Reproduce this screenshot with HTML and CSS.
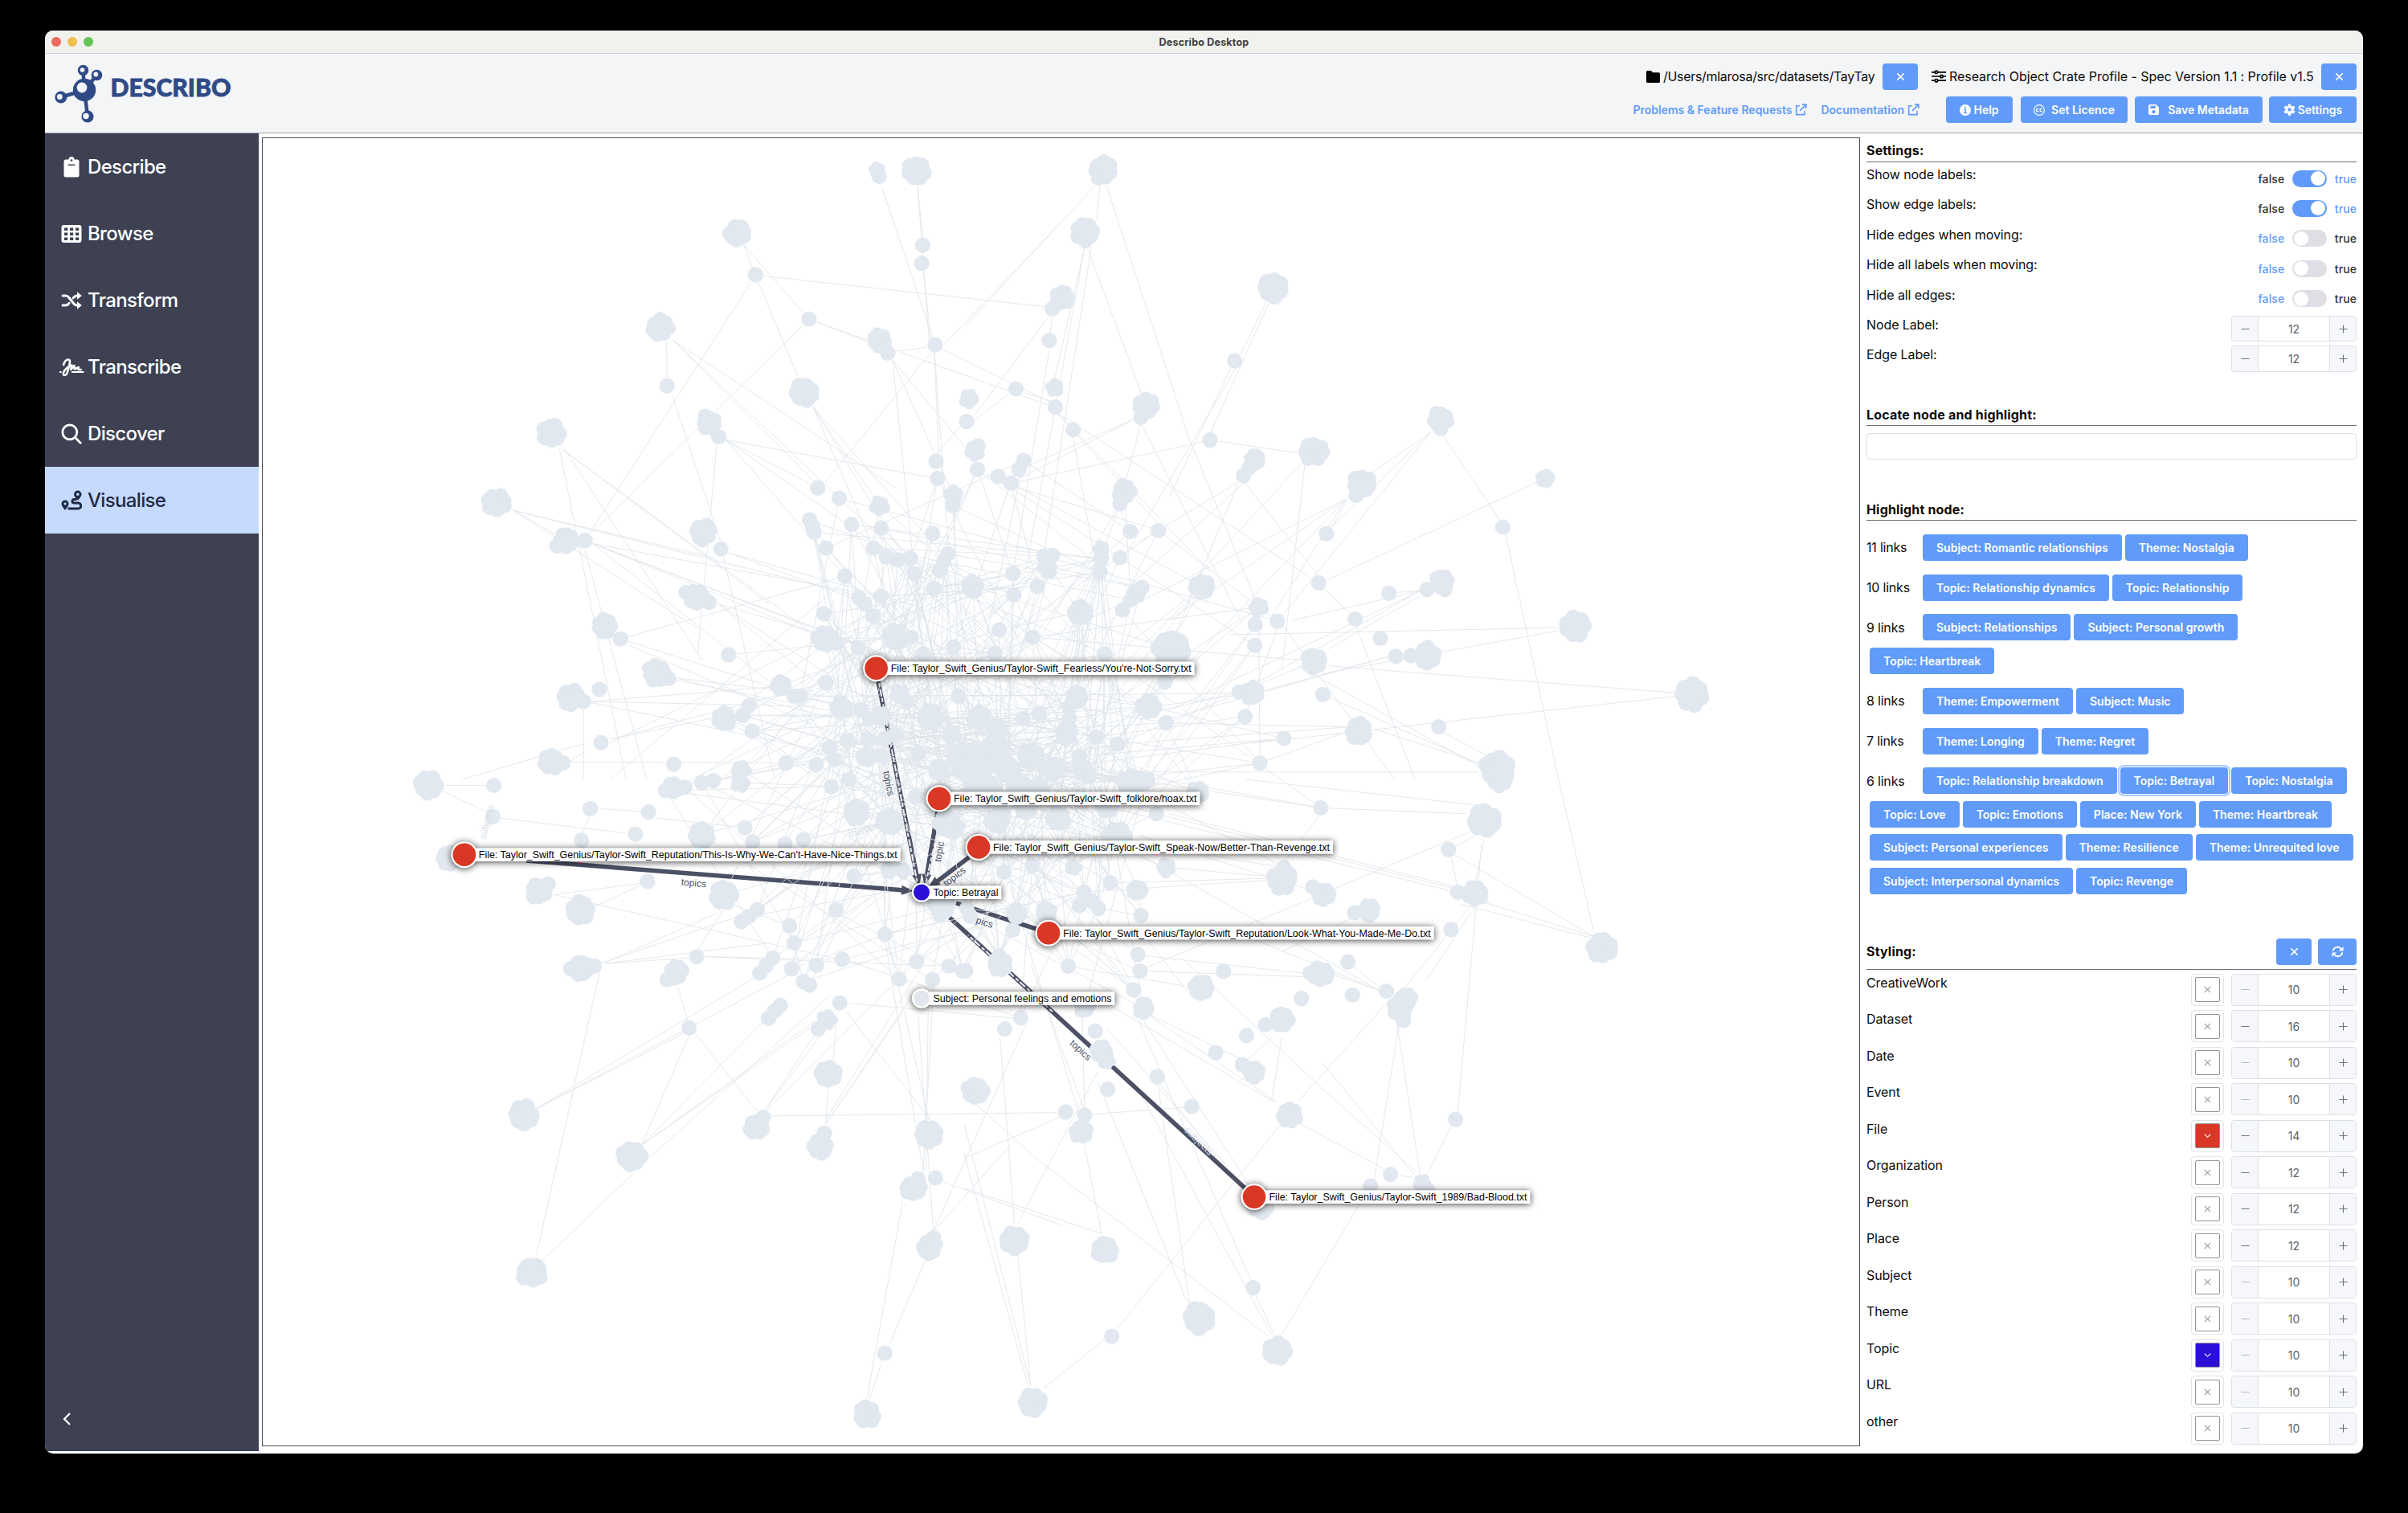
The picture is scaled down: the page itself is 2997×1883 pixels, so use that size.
FILE: index.html
```html
<!DOCTYPE html>
<html lang="en">
<head>
<meta charset="utf-8">
<title>Describo Desktop</title>
<link rel="stylesheet" href="styles.css">
</head>
<body>
<svg class="defs" width="0" height="0">
  <symbol id="i-x" viewBox="0 0 12 12"><path d="M1.5 1.5l9 9M10.500 1.500l-9 9" fill="none" stroke="currentColor" stroke-width="1.600"/></symbol>
  <symbol id="i-xthin" viewBox="0 0 12 12"><path d="M2 2l8 8M10 2l-8 8" fill="none" stroke="currentColor" stroke-width="1.100"/></symbol>
  <symbol id="i-down" viewBox="0 0 12 12"><path d="M2 4l4 4 4-4" fill="none" stroke="currentColor" stroke-width="1.200"/></symbol>
  <symbol id="i-minus" viewBox="0 0 12 12"><path d="M.5 6h11" stroke="currentColor" stroke-width="1.200"/></symbol>
  <symbol id="i-plus" viewBox="0 0 12 12"><path d="M.5 6h11M6 .5v11" stroke="currentColor" stroke-width="1.200"/></symbol>
  <symbol id="i-ext" viewBox="0 0 16 16"><path d="M6.500 3H1.800v11.500h11V9.500M9.500 1.200h5.300v5.300M14.500 1.500L6.500 9.500" fill="none" stroke="currentColor" stroke-width="1.700"/></symbol>
</svg>
<div class="window">
  <div class="titlebar">
    <div class="lights"><i class="light red"></i><i class="light amber"></i><i class="light green"></i></div>
    <span class="title">Describo Desktop</span>
  </div>
  <header class="header">
    <svg class="logo" width="224" height="76" viewBox="0 0 224 76">
      <g stroke="#2f4b87" stroke-width="4.500" fill="none"><path d="M38 34L36.500 10M38 34L53 16M38 34L9 43M38 34L42 67"/></g>
      <g fill="#2f4b87"><circle cx="38" cy="34" r="14.200"/><circle cx="36.500" cy="9.500" r="6.700"/><circle cx="53.500" cy="15.500" r="6.800"/><circle cx="8.800" cy="43" r="7.500"/><circle cx="42" cy="67" r="7.600"/></g>
      <g fill="#f3f5f7"><circle cx="35" cy="31" r="6.400"/><circle cx="35.500" cy="9" r="2.800"/><circle cx="52.300" cy="14.500" r="2.900"/><circle cx="7.300" cy="42.500" r="3.400"/><circle cx="40" cy="66.500" r="3.700"/></g>
      <text class="logo-text" x="70.500" y="42" textLength="150" lengthAdjust="spacingAndGlyphs">DESCRIBO</text>
    </svg>
    <div class="header-right">
      <div class="line">
        <svg class="folder" width="17" height="15" viewBox="0 0 17 15"><path d="M0 1.500Q0 0 1.500 0H6l2 2.200h7.500Q17 2.200 17 3.700v9.800Q17 15 15.500 15h-14Q0 15 0 13.500z"/></svg>
        <span class="path">/Users/mlarosa/src/datasets/TayTay</span>
        <button class="btn x-btn after-path"><svg width="11" height="11"><use href="#i-x"/></svg></button>
        <svg class="sliders" width="18" height="16" viewBox="0 0 18 16"><g stroke="#000" stroke-width="1.700" fill="#f3f5f7"><path d="M0 2.800h18M0 8h18M0 13.200h18"/><circle cx="6" cy="2.800" r="1.700"/><circle cx="12.500" cy="8" r="1.700"/><circle cx="6" cy="13.200" r="1.700"/></g></svg>
        <span class="profile">Research Object Crate Profile - Spec Version 1.1 : Profile v1.5</span>
        <button class="btn x-btn"><svg width="11" height="11"><use href="#i-x"/></svg></button>
      </div>
      <div class="line second">
        <a class="link problems"><span>Problems &amp; Feature Requests</span><svg width="15" height="15"><use href="#i-ext"/></svg></a>
        <a class="link docs"><span>Documentation</span><svg width="15" height="15"><use href="#i-ext"/></svg></a>
        <button class="btn help"><svg width="14" height="14" viewBox="0 0 14 14"><circle cx="7" cy="7" r="7" fill="#fff"/><path d="M5.300 6.300H7.300V10.500M5.300 10.500h3.700" stroke="#619bf9" stroke-width="1.500" fill="none"/><circle cx="7" cy="3.600" r="1.100" fill="#619bf9"/></svg><span>Help</span></button>
        <button class="btn licence"><svg width="14" height="14" viewBox="0 0 14 14" fill="none" stroke="#fff"><circle cx="7" cy="7" r="6.400" stroke-width="1.100"/><path d="M6.400 5.600a1.800 1.800 0 1 0 0 2.800M10.900 5.600a1.800 1.800 0 1 0 0 2.800" stroke-width="1.200"/></svg><span>Set Licence</span></button>
        <button class="btn save"><svg width="13" height="13" viewBox="0 0 14 14"><path fill="#fff" fill-rule="evenodd" d="M1.800 0H10l4 4v8.200Q14 14 12.200 14H1.800Q0 14 0 12.200V1.800Q0 0 1.800 0zM2.500 2v3.500h7V2zM7 7.500a2.300 2.300 0 1 0 .01 0z"/></svg><span>Save Metadata</span></button>
        <button class="btn settings"><svg width="15" height="15" viewBox="0 0 16 16"><g stroke="#fff" stroke-width="3.600"><path d="M8 0.400v15.200M1.400 4.200l13.200 7.600M1.400 11.800l13.200-7.600"/></g><circle cx="8" cy="8" r="5.600" fill="#fff"/><circle cx="8" cy="8" r="2.300" fill="#619bf9"/></svg><span>Settings</span></button>
      </div>
    </div>
  </header>
  <div class="body">
    <nav class="nav">
      <a class="item"><svg width="26" height="26" viewBox="0 0 26 26"><path fill="#fff" d="M6 3.500h3.500a3.500 3.500 0 0 1 7 0H20q2.500 0 2.500 2.500v17q0 2.500-2.500 2.500H6Q3.500 25.500 3.500 23V6Q3.500 3.500 6 3.500z"/><circle cx="13" cy="4.600" r="1.300" fill="#3d4152"/><path d="M8.500 10.300h9" stroke="#3d4152" stroke-width="1.600"/></svg>Describe</a>
      <a class="item"><svg width="26" height="26" viewBox="0 0 26 26"><path fill="#fff" fill-rule="evenodd" d="M3.500 2h19q3 0 3 3v16q0 3-3 3h-19q-3 0-3-3V5q0-3 3-3zM4 5.500v3.500h4.200V5.500zM11 5.500v3.500h4.200V5.500zM18 5.500v3.500h4.200V5.500zM4 11.500v3.500h4.200v-3.500zM11 11.500v3.500h4.200v-3.500zM18 11.500v3.500h4.200v-3.500zM4 17.500v3.500h4.200v-3.500zM11 17.500v3.500h4.200v-3.500zM18 17.500v3.500h4.200v-3.500z"/></svg>Browse</a>
      <a class="item"><svg width="26" height="26" viewBox="0 0 26 26"><g fill="none" stroke="#fff" stroke-width="3" stroke-linecap="round"><path d="M2 7h3.500q2.500 0 4 2l6.500 8q1.500 2 4 2h1M2 19h3.500q2.500 0 4-2l.5-.6M15 9.800l1-.8q1.500-2 4-2h1"/></g><path fill="#fff" d="M20 2.200l5.800 4.800-5.800 4.800zM20 14.200l5.800 4.800-5.800 4.800z"/></svg>Transform</a>
      <a class="item"><svg class="wide" width="32" height="26" viewBox="0 0 32 26"><g fill="none" stroke="#fff" stroke-width="2.600" stroke-linecap="round" stroke-linejoin="round"><path d="M6 10q2-6.500 6-6.500 3 0 1.500 6l-2.200 8.500q-1.300 5-4 5-2.500-.5-1-4 2.500-5.500 10-8.500l-1 5.500 4-5 .5 4.500 5-2.500-.5 3h3.500"/></g><path d="M1 19h2.500M16 19h15.500" stroke="#fff" stroke-width="2"/></svg>Transcribe</a>
      <a class="item"><svg width="26" height="26" viewBox="0 0 26 26"><g fill="none" stroke="#fff" stroke-width="2.800" stroke-linecap="round"><circle cx="10.800" cy="10.800" r="9"/><path d="M17.500 17.500l6.700 6.700"/></g></svg>Discover</a>
      <a class="item active"><svg width="26" height="26" viewBox="0 0 26 26"><path fill="#1f2a44" fill-rule="evenodd" d="M20.800.5a4.700 4.700 0 0 1 4.700 4.700c0 2.500-3 5.800-4.700 7.300-1.700-1.500-4.700-4.800-4.700-7.300A4.700 4.700 0 0 1 20.800.5zm0 2.900a1.800 1.800 0 1 0 .01 0zM5 12.500a4.500 4.500 0 0 1 4.500 4.500c0 2.500-3 6.300-4.500 7.800C3.500 23.300.5 19.500.5 17A4.500 4.500 0 0 1 5 12.500zm0 2.900a1.600 1.600 0 1 0 .01 0z"/><path d="M19.500 11.500h-3.200a2.300 2.300 0 0 0 0 4.600h5a3.400 3.400 0 0 1 0 6.900H8.500" fill="none" stroke="#1f2a44" stroke-width="3"/></svg>Visualise</a>
      <a class="collapse"><svg width="12" height="18" viewBox="0 0 12 18"><path d="M10 2L3 9l7 7" fill="none" stroke="#fff" stroke-width="2.200"/></svg></a>
    </nav>
    <main class="canvas"><svg id="graph" width="1985" height="1625" viewBox="328 173 1985 1625"></svg></main>
    <aside class="panel">
      <h2 class="head">Settings:</h2>
      <div class="rows short" id="options"></div>
      <h2 class="head locate">Locate node and highlight:</h2>
      <input class="search">
      <h2 class="head highlight">Highlight node:</h2>
      <div id="links"></div>
      <div class="head styling"><span>Styling:</span>
        <button class="btn x-btn"><svg width="11" height="11"><use href="#i-x"/></svg></button>
        <button class="btn refresh"><svg width="15" height="15" viewBox="0 0 16 16"><g fill="none" stroke="#fff" stroke-width="2"><path d="M1.800 7A6.200 6.200 0 0 1 13 4.500M14.200 9A6.200 6.200 0 0 1 3 11.500"/></g><path fill="#fff" d="M15.500 1v6h-6zM.5 15V9h6z"/></svg></button>
      </div>
      <div class="rows tall" id="styling"></div>
    </aside>
  </div>
</div>
<script src="app.js"></script>
</body>
</html>
```
FILE: styles.css
```css
* { box-sizing: border-box; }
body { margin: 0; background: #000; padding: 38px 56px 0; width: 2997px; height: 1883px; overflow: hidden; font-family: Inter, "Liberation Sans", sans-serif; font-size: 16px; color: #0b0b0b; }
.defs { position: absolute; }
.window { width: 2885px; height: 1771px; background: #fff; border-radius: 10px; overflow: hidden; display: flex; flex-direction: column; }
.titlebar { height: 29px; background: #f1f1ee; border-bottom: 1px solid #cfcfcf; display: grid; grid-template-columns: 200px 1fr 200px; align-items: center; }
.lights { display: flex; gap: 8px; padding-left: 8px; }
.light { width: 12px; height: 12px; border-radius: 50%; }
.red { background: #ed6a5e; }
.amber { background: #f4be4f; }
.green { background: #61c454; }
.title { text-align: center; font-weight: 700; font-size: 12.5px; color: #3f3f3f; letter-spacing: 0.2px; }
.header { height: 99px; background: #f3f5f7; border-bottom: 1px solid #a3a7ad; display: flex; justify-content: space-between; padding: 0 8px 0 11px; }
.logo { margin-top: 11px; }
.logo-text { font: 900 29.500px Lato, sans-serif; fill: #2f4b87; stroke: #2f4b87; stroke-width: 0.800px; }
.header-right { padding-top: 11px; }
.line { display: flex; align-items: center; height: 34px; justify-content: flex-end; }
.second { margin-top: 8px; height: 33px; }
.path { width: 264px; margin: 0 9px 0 4px; white-space: nowrap; letter-spacing: -0.3px; }
.profile { width: 455px; margin: 0 8px 0 4px; white-space: nowrap; letter-spacing: -0.05px; }
.after-path { margin-right: 17px; }
.btn { border: 0; border-radius: 4px; background: #619bf9; color: #fff; height: 33px; padding: 0; display: inline-flex; align-items: center; justify-content: center; font: 600 14px Inter, sans-serif; white-space: nowrap; flex: none; }
.x-btn { width: 44px; }
.refresh { width: 48px; margin-left: 8px; }
.link { display: flex; align-items: center; gap: 4px; color: #619bf9; font-weight: 600; font-size: 14px; white-space: nowrap; }
.problems { margin-right: 17px; }
.docs { margin-right: 33px; }
.help { width: 83px; gap: 3px; margin-right: 10px; }
.licence { width: 133px; gap: 8px; margin-right: 9px; }
.save { width: 159px; gap: 11px; margin-right: 8px; }
.settings { width: 109px; gap: 3px; }
.body { display: flex; flex: 1; }
.nav { width: 266px; height: 1640px; background: #3d4152; display: flex; flex-direction: column; }
.item { height: 83px; display: flex; align-items: center; gap: 7px; padding-left: 20px; color: #fff; font-weight: 500; font-size: 24px; letter-spacing: -0.65px; }
.item .wide { margin: 0 -3px; }
.active { background: #c6dafd; color: #1f2a44; }
.collapse { margin: auto 0 31px 21px; height: 18px; }
.canvas { margin: 5px 8px 0 4px; width: 1989px; height: 1629px; border: 1px solid #494c57; padding: 1px; }
.canvas svg { display: block; }
.panel { width: 610px; }
.head { margin: 0; padding-top: 9px; height: 35.500px; font-size: 16px; line-height: 24px; font-weight: 700; border-bottom: 1px solid #6b6f76; letter-spacing: 0.17px; }
.locate { margin-top: 32px; }
.highlight { margin-top: 40.500px; margin-bottom: 12.500px; }
.rows { display: flex; flex-direction: column; }
.short { gap: 5px; padding-top: 4.500px; }
.tall { gap: 5.500px; padding-top: 5px; }
.row { display: flex; align-items: flex-start; line-height: 23px; }
.short .row { height: 32.400px; }
.tall .row { height: 40px; }
.label { flex: 1; letter-spacing: -0.1px; }
.switch { display: flex; align-items: center; gap: 10px; height: 32px; font-size: 14px; font-weight: 500; color: #303133; letter-spacing: 0.1px; }
.switch .on { color: #619bf9; }
.track { width: 42.500px; height: 21px; border-radius: 11px; background: #dddfe5; padding: 1.500px 2px; display: flex; }
.track.right { background: #619bf9; justify-content: flex-end; }
.track i { width: 18px; height: 18px; border-radius: 50%; background: #fff; }
.number { width: 156px; height: 100%; border: 1px solid #dcdfe6; border-radius: 4px; display: grid; grid-template-columns: 33px 1fr 33px; color: #606266; font-size: 14px; overflow: hidden; }
.number span { display: flex; align-items: center; justify-content: center; }
.step { background: #f5f7fa; color: #6f7278; }
.step:first-child { border-right: 1px solid #dcdfe6; }
.step:last-child { border-left: 1px solid #dcdfe6; }
.step.off { color: #b5b8bf; }
.picker { width: 41px; height: 40px; border: 1px solid #e2e4ea; border-radius: 4px; margin-right: 9px; display: flex; align-items: center; justify-content: center; }
.swatch { width: 31px; height: 31px; border: 1px solid #909399; border-radius: 2px; display: flex; align-items: center; justify-content: center; color: #909399; }
.search { display: block; width: 610px; height: 33px; margin: 9px 0 0; border: 1px solid #dcdfe6; border-radius: 4px; }
.group { display: flex; flex-wrap: wrap; align-items: center; margin-bottom: 8.300px; }
.count { width: 66px; letter-spacing: -0.2px; }
.group .btn { margin: 4.200px 0 4.300px 4px; padding: 0 17px; }
.group .focus { outline: 2px solid #a9c9fd; outline-offset: 1px; }
.styling { margin-top: 42.500px; height: 47px; padding: 0 0 4.500px; display: flex; align-items: flex-end; }
.styling span { flex: 1; line-height: 33px; }
.faint { stroke: #dfe5eb; stroke-width: 0.850; fill: none; }
.strong { stroke: #4b5064; stroke-width: 5.500; fill: none; }
.grain { stroke: #e9ecf1; stroke-width: 2; stroke-dasharray: 5 3 9 2; fill: none; }
.node { fill: #e2e8f0; }
.tag { fill: #fff; filter: drop-shadow(0 1px 4px rgba(0,0,0,.75)); }
.tag-text { font: 12px "Liberation Sans", Arial, sans-serif; fill: #000; }
.edge-text { font: 12px "Liberation Sans", Arial, sans-serif; fill: #4b5064; text-anchor: middle; }
.edge-text.pale { fill: #d9dfe7; }
```
FILE: app.js
```js
const icon = (id, size) => `<svg width="${size}" height="${size}"><use href="#i-${id}"/></svg>`;
const number = (v, off) => `<div class="number"><span class="step${off ? ' off' : ''}">${icon('minus', 11)}</span><span>${v}</span><span class="step">${icon('plus', 11)}</span></div>`;
const toggle = on => `<div class="switch"><span class="${on ? '' : 'on'}">false</span><div class="track ${on ? 'right' : ''}"><i></i></div><span class="${on ? 'on' : ''}">true</span></div>`;
const row = (label, control) => `<div class="row"><span class="label">${label}</span>${control}</div>`;

document.getElementById('options').innerHTML =
  [['Show node labels:', 1], ['Show edge labels:', 1], ['Hide edges when moving:', 0], ['Hide all labels when moving:', 0], ['Hide all edges:', 0]]
    .map(([l, on]) => row(l, toggle(on))).join('') + row('Node Label:', number(12)) + row('Edge Label:', number(12));

document.getElementById('links').innerHTML = [
  [11, 'Subject: Romantic relationships', 'Theme: Nostalgia'],
  [10, 'Topic: Relationship dynamics', 'Topic: Relationship'],
  [9, 'Subject: Relationships', 'Subject: Personal growth', 'Topic: Heartbreak'],
  [8, 'Theme: Empowerment', 'Subject: Music'],
  [7, 'Theme: Longing', 'Theme: Regret'],
  [6, 'Topic: Relationship breakdown', 'Topic: Betrayal', 'Topic: Nostalgia', 'Topic: Love', 'Topic: Emotions', 'Place: New York', 'Theme: Heartbreak', 'Subject: Personal experiences', 'Theme: Resilience', 'Theme: Unrequited love', 'Subject: Interpersonal dynamics', 'Topic: Revenge']
].map(([n, ...names]) => `<div class="group"><span class="count">${n} links</span>${names.map(t => `<button class="btn${t === 'Topic: Betrayal' ? ' focus' : ''}">${t}</button>`).join('')}</div>`).join('');

document.getElementById('styling').innerHTML = [
  ['CreativeWork', 10], ['Dataset', 16], ['Date', 10], ['Event', 10], ['File', 14, '#d83825'], ['Organization', 12], ['Person', 12],
  ['Place', 12], ['Subject', 10], ['Theme', 10], ['Topic', 10, '#2b0fd6'], ['URL', 10], ['other', 10]
].map(([l, n, c]) => row(l, `<div class="picker"><div class="swatch"${c ? ` style="background:${c};color:#fff"` : ''}>${icon(c ? 'down' : 'xthin', 11)}</div></div>` + number(n, n === 10))).join('');

// Graph layout in tiles, each with its origin, scale, nodes "x,y[,r]" and edges "x1,y1,x2,y2".
const tiles = [
  { x: 320, y: 170, kx: 1.568, ky: 1.96,
    nodes: '1210,82,11 1214,97 1287,84,19 938,237,18 973,337 1299,265 1297,309 1077,445 787,465,18 800,608 1215,497,16 1231,528 1323,508 1068,623,19 882,698,16 875,682 901,732 575,723,19 468,893,19 1094,857 1136,882 1325,792 1328,834 1359,874,13 1357,900 1215,900,13 1218,955 1078,935 1084,950 1087,965 1160,946 1318,968 1110,1004 1203,1004 870,965,18 905,1006 602,985,17 640,985 585,998 1228,1025 1250,1033 1275,1028 1283,1066 1348,1018 1340,1035 1332,1058 1321,1103 1147,1072 1217,1122 1106,1164 1174,1125 1186,1140 1203,1170 858,1122,17 837,1112 882,1136 678,1192,17 709,1225 920,1264 1108,1225,18 1130,1235 1173,1247 1245,1222,17 1277,1222 1359,1245 1300,1262 779,1308,18 803,1322 612,1367,18 637,1378 668,1348 1022,1338,14 1060,1365 1048,1365 1110,1332 1140,1392,15 1178,1398 960,1388 912,1420,16 948,1412 966,1450 671,1478 575,1525,17 597,1528 813,1531 1032,1528 1091,1532 1117,1490 1127,1520 1152,1472 1253,1360,13 1268,1378 1219,1412,13 1195,1420 1369,1365 1313,1417,17 1355,1460,13 1193,1470 1225,1468 1245,1460 1190,1512,14 1220,1512 1290,1505 1375,1510,17 945,1545,13 1330,1545,14',
    edges: '1218,120,1318,490 1289,120,1299,250 1289,120,1312,508 1300,325,1315,495 950,265,967,320 950,265,1065,428 978,355,1055,583 988,340,1545,416 963,357,640,985 1065,460,655,965 1093,453,1190,500 1093,453,1545,655 812,497,1100,857 812,497,1250,860 812,497,1320,1100 799,500,800,590 810,630,905,990 1568,210,1340,508 1320,520,1110,840 1250,524,1305,514 1340,520,1560,655 1240,545,1350,850 1240,545,1390,770 1240,545,1283,1066 1322,525,1330,780 1322,525,1350,1020 1085,660,1215,900 1085,660,1283,1066 1085,660,1203,1004 1085,660,1340,1020 1400,692,1468,627 1370,710,1325,775 1500,625,1560,650 915,740,1325,834 915,740,1094,857 915,740,1283,1060 915,740,1147,1072 897,750,860,1260 595,762,1000,1140 595,762,1170,1290 590,762,720,1568 600,762,870,1280 500,912,900,1030 500,912,1205,1130 500,912,640,1010 500,912,860,1200 655,993,1200,1250 655,993,1110,1225 655,993,1300,1300 655,993,1000,1330 655,993,1217,1122 640,1010,760,1568 920,1015,1300,1150 920,1015,1170,1130 910,1025,1010,1568 900,1140,1200,1250 900,1140,1350,1500 900,1140,1300,1540 709,1225,1150,1072 709,1225,1060,1365 725,1240,1150,1470 815,1320,1140,1370 815,1320,1190,1440 650,1378,1030,1340 650,1378,1090,1390 650,1380,1110,1500 637,1400,637,1568 690,1470,960,1400 690,1470,1110,1332 400,1568,640,1480 610,1525,1030,1528 610,1525,640,1500 1300,1100,690,1478 1147,1085,690,1568' },
  { x: 1200, y: 170, kx: 1.568, ky: 1.96,
    nodes: '271,83,19 235,233,19 192,393,16 172,420 166,497 101,615 177,612,12 178,660 213,715 10,640,13 5,695 20,768,13 27,755 26,812 116,790 107,812 66,829 91,845 356,655,17 345,685 604,370,20 528,547 480,740 568,788,14 545,827 556,808 682,768,19 776,848,19 765,875 930,690,17 930,712 1134,834,13 1051,953 313,865,16 304,895 324,963 379,961 267,1005,11 268,1030 265,1062 304,1027 707,969 692,1089 829,1114 155,1023 172,1022 163,1055,13 95,1066 143,1097 97,1118 17,1097,15 335,1115,13 347,1100 325,1130 309,1155 464,1098,17 227,1160,17 68,1203 134,1221 60,1260 275,1262 575,1148,13 568,1190 611,1182 567,1241 763,1177 812,1224 932,1085,16 903,1105 938,1105 1192,1195,20 404,1250,25 842,1268 872,1266 903,1265,18 683,1280,17 392,1330 218,1362,13 205,1390 205,1420 360,1390,17 394,1430 562,1357,16 537,1355 548,1415 700,1361 1420,1360,22 769,1450,18 926,1440 624,1468 577,1528 30,1418,16 65,1448,14 115,1420 146,1408 198,1460,14 258,1465 299,1482 130,1510,17 45,1515,22 10,1510,15 225,1512 180,1540,14 1040,1540,22 235,1550,13 340,1570,14',
    edges: '255,120,0,465 265,120,258,200 278,120,440,740 440,740,575,1150 235,270,175,600 235,270,120,1060 248,270,155,1023 240,270,350,640 172,435,168,480 170,430,20,680 166,520,95,1066 590,402,540,530 595,405,480,725 530,565,320,1010 520,565,400,880 910,722,710,960 910,722,760,850 935,730,1045,935 910,722,620,1170 1118,843,708,1082 1057,972,1160,1568 1390,1357,700,1290 1390,1365,560,1480 1160,1198,520,1215 1160,1205,700,1310 650,772,497,743 660,795,460,1065 665,795,620,1300 465,745,95,845 545,840,690,1070 550,840,320,1100 545,835,340,990 535,845,350,1400 750,880,720,950 745,885,400,1180 745,885,350,1400 745,885,600,1170 745,885,309,1155 890,1108,845,1112 890,1108,640,1180 890,1108,400,1400 890,1108,560,1340 890,1120,710,1250 1010,1530,800,1445 1005,1530,700,1361 1020,1510,930,1450 1005,1550,300,1550 1010,1540,650,1290 330,690,130,800 330,690,91,845 345,700,304,895 345,700,540,1180 178,670,379,945 178,670,692,1089 180,670,480,1060 213,735,330,1568 100,855,379,960 45,820,304,1027 300,905,140,1240 300,905,325,960 750,1440,300,1482 750,1440,394,1430 750,1450,577,1528 611,1200,548,1415 830,1268,560,1360 830,1268,400,1420 692,1089,763,1177 763,1190,880,1568 620,1190,840,1568' },
  { x: 320, y: 970, kx: 1.568, ky: 1.867,
    nodes: '335,12,19 462,14 460,86 650,68 764,76 633,142 738,127 812,20,15 835,18 797,26 868,8 890,3 943,8,13 1121,17 1155,0 868,130,17 952,112 967,145 1066,140 1030,150 1170,78,17 1235,98,18 1345,100,18 1285,40 375,182,17 550,258,17 568,243 540,273 631,303,19 762,237 911,268,19 945,330 960,318 976,303 1165,225 1232,212,11 1260,212,11 1039,340 1048,380 1130,303 1225,360 632,440,17 658,433 612,440 858,412 818,448,16 800,465 1006,415 993,433 981,450 1043,440 1092,432 1142,418 1066,470 1078,478 1253,464 1287,423 1350,434 1377,445 1318,465 1021,525 1010,538 998,555 1137,519 1112,558,13 1095,580 843,577 1114,683,18 520,780,20 731,876,20 988,785 975,808,17 1107,822 1100,855,17 1311,825,19 1290,928 1281,950,17 1324,926 1320,1065 1312,1087,17 1225,1333 1190,1476,18 536,1145,20 1335,295,17 1332,315',
    edges: '545,765,1000,440 545,765,1060,440 545,765,850,580 750,850,1090,560 750,850,1137,530 750,850,990,560 750,850,845,590 765,880,1120,500 545,1105,670,440 555,1120,735,915 990,770,1090,590 990,770,1137,535 990,775,1287,423 855,590,975,770 1005,782,1560,774 1110,800,1114,720 1110,800,1280,500 1110,800,1260,540 1125,650,1130,560 1305,910,1310,500 1300,910,1320,480 1190,1440,1260,980 1195,1440,1220,1350 1235,1310,1305,1115 1320,1050,1500,570 1320,1050,1470,850 1320,1050,1290,550 1340,935,1568,1035 680,428,840,415 680,428,1000,380 680,425,900,310 822,485,840,560 350,14,450,14 350,20,455,80 475,90,720,125 435,120,455,100 580,268,1180,430 565,270,760,240 650,300,760,240 875,412,1120,418 875,412,1350,434 911,300,858,400 925,290,1039,340 1110,790,1300,430 1155,520,1480,555 1150,540,1320,800 1230,370,1311,790 1225,370,1300,910 650,85,633,130 670,68,764,76 780,90,950,112 1130,310,1400,470 960,310,640,440' },
  { x: 1200, y: 970, kx: 1.568, ky: 1.867,
    nodes: '22,724,18 98,1070,19 198,773 235,780 229,820,15 280,720 256,585 268,632,15 278,655,11 377,691 444,760 133,1447,19 288,1294 274,1093,18 458,1252,21 564,1181 611,1328,19 577,985,20 832,918 793,945 893,938,12 905,955 959,790 635,780,17 543,663 565,680,15 491,635 551,595 588,570 620,558,17 658,509 506,446 463,485,17 758,501 749,424 696,452,17 675,450 824,492 862,510,15 850,532,17 857,560 350,532,14 331,489 343,445 339,407 203,434 345,316 70,430,16 68,410 3,445 110,554 79,580 235,530,14 1245,390,20 950,349 963,262 998,265,17 945,163 696,66 1014,95,22 620,232,20 624,205 702,268,16 680,250 762,310 790,305,15 1045,0,17 338,257,14 285,240 225,293 262,300 250,283 234,262 103,312,14 95,350 160,310,14 394,205,13 300,135,20 375,80 455,30,15 213,205,11 133,200 78,215 180,90,15 120,70,14 65,95,17 5,300 12,318 105,15,15 150,20,13 45,30,20 230,50,11',
    edges: '1228,365,960,265 1228,365,950,170 1228,370,970,290 1160,0,1228,350 1010,150,963,775 950,808,905,915 1000,290,900,470 990,290,850,500 655,800,820,905 615,805,300,1275 275,1300,155,1415 130,1410,0,800 130,1410,105,1110 125,1410,0,870 435,1215,260,700 440,1220,377,700 600,1290,330,700 605,1290,568,1195 595,1295,140,880 140,880,0,730 560,1165,340,560 620,1290,780,970 840,530,890,920 800,930,850,560 885,915,700,720 700,720,430,420 268,1055,0,950 268,1055,235,850 98,1030,70,600 105,1030,260,680 820,492,749,424 810,490,700,445 810,490,500,340 810,490,350,180 250,778,430,762 0,880,200,778 650,750,840,500 1014,140,998,240 980,80,696,66 1000,130,945,163 1000,60,550,0 990,120,350,440 960,250,400,80 960,255,375,80 960,262,300,70 696,80,620,200 590,225,400,205 590,230,300,240 670,255,340,130 760,320,620,400 700,460,343,445 660,450,331,407 430,480,203,434 440,500,350,360 600,600,545,660 540,650,350,540 620,600,600,745 610,750,350,540 605,750,250,500 550,950,280,580 545,960,377,700 560,950,350,560 230,800,90,250 235,770,130,430 235,770,230,530 900,950,700,660 850,920,875,925 950,180,963,250' },
  { x: 1000, y: 800, kx: 3, ky: 3,
    nodes: '655,430,21 720,385,17 640,520,17 760,470,17 930,470,16 985,330,14 1020,205,15 560,690,15 850,415,14 1220,525,18 1280,515,12 955,655,15 735,650,14 1130,610,15 1175,730,17 590,470,14 1060,490,13 830,560,15',
    edges: '' }
];

// Small seeded generator so the layout is stable between reloads.
let seed = 41;
const rand = () => (seed = (seed * 16807) % 2147483647) / 2147483647;
const f = n => n.toFixed(1);
const nodes = [], edges = [];
for (const t of tiles) {
  const px = (x, y) => [t.x + x / t.kx, t.y + y / t.ky];
  for (const s of t.nodes.split(' ')) { const [x, y, r] = s.split(',').map(Number); nodes.push([...px(x, y), r || 9.6]); }
  for (const s of t.edges.split(' ').filter(Boolean)) { const [a, b, c, d] = s.split(',').map(Number); edges.push([...px(a, b), ...px(c, d)]); }
}
const path = list => list.map(([a, b, c, d]) => `M${f(a)} ${f(b)}L${f(c)} ${f(d)}`).join('');

const core = nodes.filter(([x, y]) => Math.hypot((x - 1240) / 430, (y - 930) / 360) < 1);
const inner = nodes.filter(([x, y]) => Math.hypot((x - 1240) / 220, (y - 930) / 210) < 1);
const links = [];
for (let i = 0; i < 860; i++) {
  const a = core[Math.floor(rand() * core.length)], pool = rand() < 0.65 ? inner : core;
  const b = pool[Math.floor(rand() * pool.length)];
  if (Math.hypot(a[0] - b[0], a[1] - b[1]) < 380) links.push([a[0], a[1], b[0], b[1]]);
}
const under = links.length - 160;

const blob = ([x, y, r]) => {
  if (r < 10) return `<circle cx="${f(x)}" cy="${f(y)}" r="${r}"/>`;
  const n = r < 14 ? 5 : 7, q = r * 0.5, start = rand() * 6;
  let out = `<circle cx="${f(x)}" cy="${f(y)}" r="${f(r * 0.85)}"/>`;
  for (let i = 0; i < n; i++) {
    const a = start + i * 6.283 / n + rand() * 0.4, d = r * (0.44 + rand() * 0.14);
    out += `<circle cx="${f(x + d * Math.cos(a))}" cy="${f(y + d * Math.sin(a))}" r="${f(q)}"/>`;
  }
  return out;
};

const strong = [
  [655, 1071, 1126, 1108], [1093, 848, 1141, 1090], [1167, 1010, 1153, 1092], [1206, 1067, 1165, 1098], [1305, 1161, 1190, 1124], [1551, 1480, 1182, 1142]
];
const arrow = (x, y, deg) => `<path fill="#4b5064" transform="translate(${x} ${y}) rotate(${deg})" d="M0 0l-15-6v12z"/>`;
const label = (x, y, deg, t, pale) => `<text class="edge-text${pale ? ' pale' : ''}" transform="translate(${x} ${y}) rotate(${deg})" y="4">${t}</text>`;
const base = 'File: Taylor_Swift_Genius/Taylor-Swift_';
const tags = [
  [1090.6, 831.7, 14.3, '#d83825', base + "Fearless/You're-Not-Sorry.txt", 1108.7, 374],
  [1169, 993.8, 14.3, '#d83825', base + 'folklore/hoax.txt', 1187, 302.500],
  [1218, 1054.400, 14.3, '#d83825', base + 'Speak-Now/Better-Than-Revenge.txt', 1236, 419],
  [1305, 1161.2, 14.3, '#d83825', base + 'Reputation/Look-What-You-Made-Me-Do.txt', 1323.2, 457.500],
  [577.9, 1063.700, 14.3, '#d83825', base + "Reputation/This-Is-Why-We-Can't-Have-Nice-Things.txt", 595.8, 521],
  [1561, 1489.600, 14.3, '#d83825', base + '1989/Bad-Blood.txt', 1579.500, 321],
  [1147, 1110.600, 10, '#2b0fd6', 'Topic: Betrayal', 1161.400, 81],
  [1147, 1242.500, 10, '#e2e7ee', 'Subject: Personal feelings and emotions', 1161.400, 222]
];
document.getElementById('graph').innerHTML =
  `<path class="faint" d="${path(edges)}"/><path class="faint" d="${path(links.slice(0, under))}"/>` +
  `<path class="strong" d="${path(strong)}"/>` +
  arrow(1137, 1109, 5) + arrow(1144, 1103, 79) + arrow(1151, 1103, 99) + arrow(1155, 1105, 143) +
  `<path class="grain" d="${path([[1094, 850, 1142, 1100], [1168, 1030, 1152, 1100], [1310, 1259, 1205, 1164]])}"/>` +
  `<path class="faint" d="${path(links.slice(under))}"/><g class="node">${nodes.map(blob).join('')}</g>` +
  label(863.4, 1099, 5, 'topics') + label(1106, 975, 79, 'topics') + label(1169, 1060, -80, 'topic') + label(1188, 1091, -38, 'topics') +
  label(1225.500, 1148, 18, 'pics') + label(1345, 1307, 43, 'topics') +
  label(606, 1023, -75, 'subjects', 1) + label(1075, 1033, -17, 'themes', 1) + label(1492, 1420, 45, 'subjects', 1) +
  tags.map(([x, y, r, c, t, tx, w]) => `<g class="tag"><rect x="${x}" y="${f(y - 8.3)}" width="${f(tx + w + 4 - x)}" height="16.600"/><circle cx="${x}" cy="${y}" r="${r + 2.2}"/></g><circle cx="${x}" cy="${y}" r="${r}" fill="${c}"/><text class="tag-text" x="${tx}" y="${f(y + 4.3)}" textLength="${w}" lengthAdjust="spacingAndGlyphs">${t}</text>`).join('');
```
